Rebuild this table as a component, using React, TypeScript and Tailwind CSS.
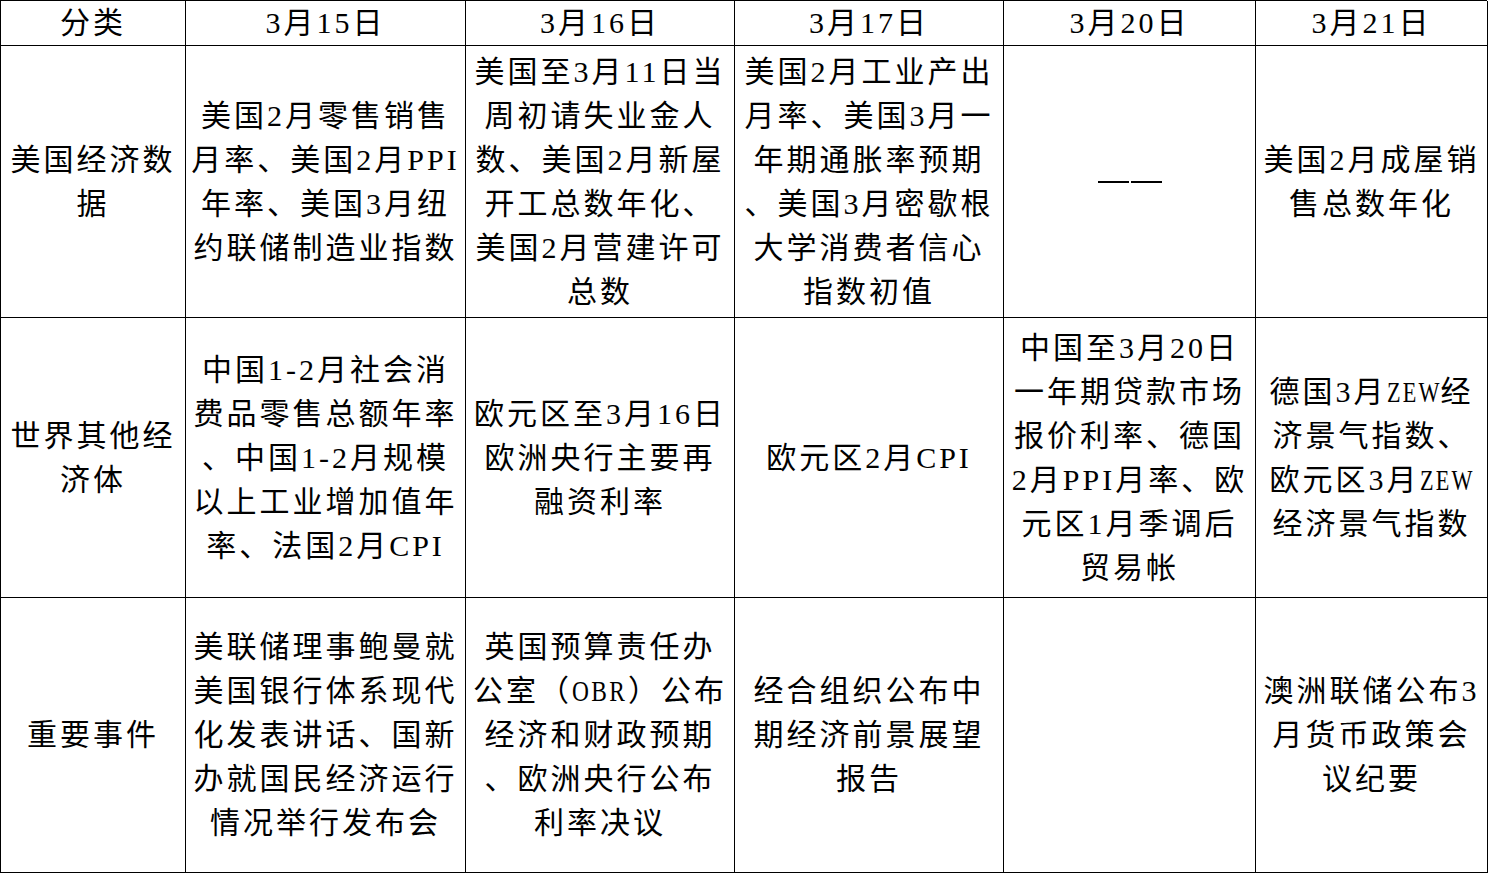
import React from "react";

const cols = "grid-cols-[185px_280px_269px_269px_252px_232px]";

const header = ["分类", "3月15日", "3月16日", "3月17日", "3月20日", "3月21日"];

const rows: { h: string; cells: string[][] }[] = [
  {
    h: "h-[272px]",
    cells: [
      ["美国经济数", "据"],
      ["美国2月零售销售", "月率、美国2月PPI", "年率、美国3月纽", "约联储制造业指数"],
      ["美国至3月11日当", "周初请失业金人", "数、美国2月新屋", "开工总数年化、", "美国2月营建许可", "总数"],
      ["美国2月工业产出", "月率、美国3月一", "年期通胀率预期", "、美国3月密歇根", "大学消费者信心", "指数初值"],
      ["——"],
      ["美国2月成屋销", "售总数年化"],
    ],
  },
  {
    h: "h-[280px]",
    cells: [
      ["世界其他经", "济体"],
      ["中国1-2月社会消", "费品零售总额年率", "、中国1-2月规模", "以上工业增加值年", "率、法国2月CPI"],
      ["欧元区至3月16日", "欧洲央行主要再", "融资利率"],
      ["欧元区2月CPI"],
      ["中国至3月20日", "一年期贷款市场", "报价利率、德国", "2月PPI月率、欧", "元区1月季调后", "贸易帐"],
      ["德国3月ZEW经", "济景气指数、", "欧元区3月ZEW", "经济景气指数"],
    ],
  },
  {
    h: "h-[275px]",
    cells: [
      ["重要事件"],
      ["美联储理事鲍曼就", "美国银行体系现代", "化发表讲话、国新", "办就国民经济运行", "情况举行发布会"],
      ["英国预算责任办", "公室（OBR）公布", "经济和财政预期", "、欧洲央行公布", "利率决议"],
      ["经合组织公布中", "期经济前景展望", "报告"],
      [],
      ["澳洲联储公布3", "月货币政策会", "议纪要"],
    ],
  },
];

function Line({ text }: { text: string }) {
  if (text === "——") {
    return (
      <div className="flex gap-[2px] h-[44px] items-center">
        <div className="w-[31px] h-[2px] bg-black" />
        <div className="w-[31px] h-[2px] bg-black" />
      </div>
    );
  }
  const parts = text.split(/(ZEW|OBR)/);
  return (
    <div className="whitespace-nowrap">
      {parts.map((p, i) =>
        p === "ZEW" ? (
          <span key={i} className="inline-block w-[54px] text-left">
            <span className="inline-block origin-left scale-x-[0.74]">ZEW</span>
          </span>
        ) : p === "OBR" ? (
          <span key={i} className="inline-block w-[56px] text-left">
            <span className="inline-block origin-left scale-x-[0.78]">OBR</span>
          </span>
        ) : (
          <React.Fragment key={i}>{p}</React.Fragment>
        )
      )}
    </div>
  );
}

export default function App() {
  return (
    <div
      className="w-[1488px] h-[874px] bg-white text-black"
      style={{ fontFamily: '"Liberation Serif", "Noto Sans CJK SC", serif' }}
    >
      <div className="w-[1487px] border-l border-t border-black">
        <div className={`grid ${cols} h-[45px]`}>
          {header.map((t, i) => (
            <div
              key={i}
              className="flex items-center justify-center border-r border-b border-black text-[30px] leading-[44px] tracking-[3px] whitespace-nowrap"
            >
              {t}
            </div>
          ))}
        </div>
        {rows.map((r, ri) => (
          <div key={ri} className={`grid ${cols} ${r.h}`}>
            {r.cells.map((lines, ci) => (
              <div
                key={ci}
                className="flex flex-col items-center justify-center border-r border-b border-black text-[30px] leading-[44px] tracking-[3px] text-center"
              >
                {lines.map((l, li) => (
                  <Line key={li} text={l} />
                ))}
              </div>
            ))}
          </div>
        ))}
      </div>
    </div>
  );
}
